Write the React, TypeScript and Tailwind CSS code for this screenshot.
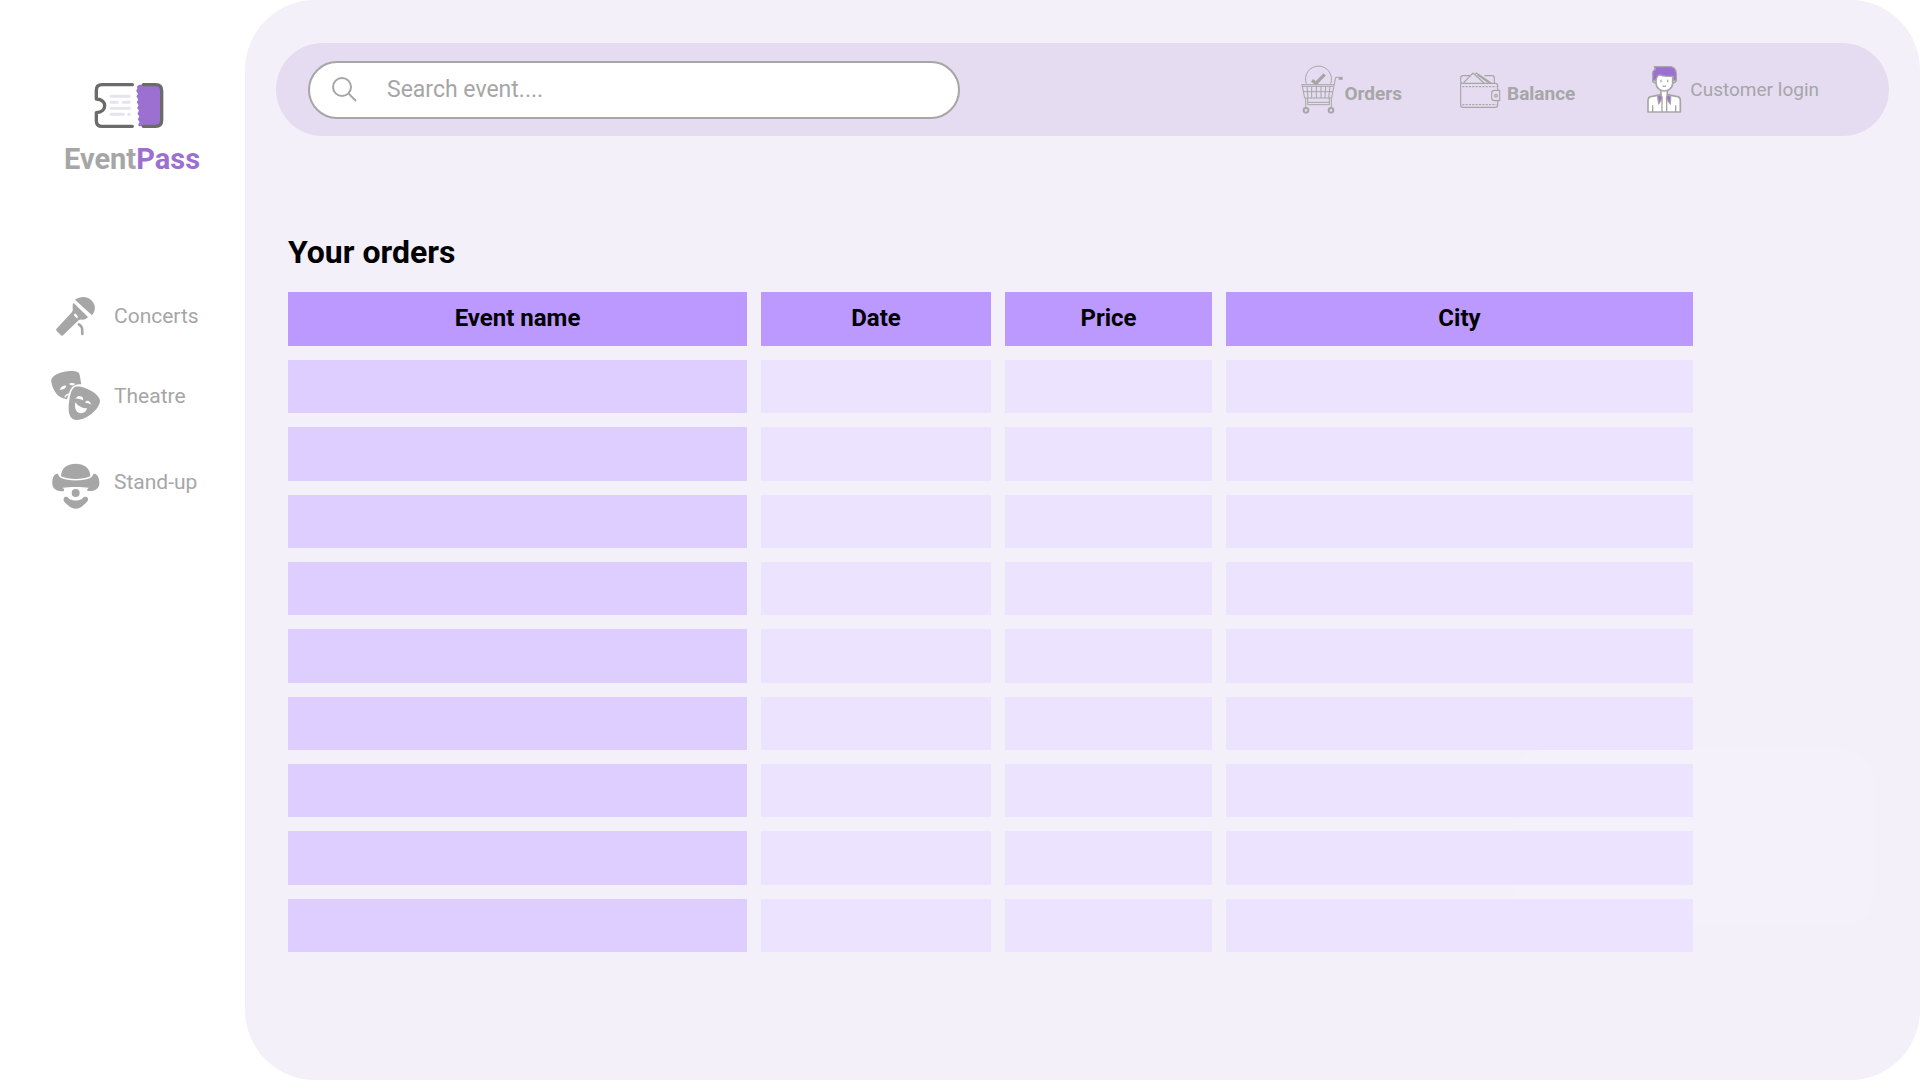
import React from "react";

function TicketLogo() {
  return (
    <svg viewBox="129 33 216 147" className="ml-[29px] h-[49px] w-[72px]" fill="none" aria-hidden="true">
      <path
        d="M267 44 L317 44 Q335 44 335 62 L335 151 Q335 169 317 169 L267 169 q-5 -5 0 -9 q4 -4 -1 -8 q-5 -5 0 -9 q4 -4 -1 -8 q-5 -5 0 -9 q4 -4 -1 -8 q-5 -5 0 -9 q4 -4 -1 -8 q-5 -5 0 -9 q4 -4 -1 -8 q-5 -5 0 -9 q4 -4 -1 -8 q-5 -5 0 -9 q4 -4 -1 -8 Z"
        fill="#9b70d0"
      />
      <path
        d="M247 44 H156 Q139 44 139 61 V87 C157 88 164 98 164 107 C164 117 157 127 139 128 V152 Q139 169 156 169 H247 M280 44 H317 Q335 44 335 62 V151 Q335 169 317 169 H280"
        stroke="#6b6b6b"
        strokeWidth="10"
        strokeLinecap="round"
        strokeLinejoin="round"
      />
      <path
        d="M183 79 H238 M183 97 H202 M219 97 H238 M183 115 H238 M183 133 H220 M236 133 H238"
        stroke="#e5e3ee"
        strokeWidth="9"
        strokeLinecap="round"
      />
    </svg>
  );
}

function MicIcon() {
  return (
    <svg viewBox="33 18 150 150" className="size-[50px] shrink-0" fill="#a6a6a6" aria-hidden="true">
      <path d="M105 44 C121 33 141 33 154 46 C168 59 168 77 156 91 Z" />
      <path d="M101 54 Q97 57 98 66 Q100 75 96 81 L49 132 Q47 135 50 138 L63 151 Q66 154 69 151 L116 106 Q120 102 129 104 Q139 104 144 96 Z" />
      <path d="M101 90 L106 85 L113 94 L112 101 Z" fill="#fff" />
      <path d="M117 118 C127 124 127 130 127 147" fill="none" stroke="#a6a6a6" strokeWidth="8" strokeLinecap="round" />
    </svg>
  );
}

function MasksIcon() {
  return (
    <svg viewBox="33 258 150 150" className="size-[50px] shrink-0 overflow-visible" fill="#a6a6a6" aria-hidden="true">
      <path d="M34 291 C30 269 75 255 105 259 C114 260 118 264 119 270 L124 298 C104 297 94 304 88 322 L81 343 C53 339 39 318 34 291 Z" />
      <path d="M59 314 Q66 300 79 302 Q77 314 59 314 Z M87 297 Q92 291 106 296 Q98 306 87 297 Z" fill="#fff" />
      <path d="M73 336 Q78 326 90 325 L88 329 Q80 330 75 338 Z" fill="#fff" />
      <path d="M106 305 C128 300 177 324 180 346 C181 369 144 404 111 405 C91 405 85 388 86 367 C87 344 92 309 106 305 Z" />
      <path d="M106 341 Q114 327 128 337 L130 346 Q117 340 106 341 Z M136 350 Q147 342 154 359 Q146 353 136 353 Z" fill="#fff" />
      <path d="M106 352 C115 365 130 371 141 370 C138 383 127 387 116 383 C106 379 103 365 106 352 Z" fill="#fff" />
    </svg>
  );
}

function ClownIcon() {
  return (
    <svg viewBox="33 516 150 150" className="size-[50px] shrink-0 overflow-visible" fill="#a6a6a6" aria-hidden="true">
      <path d="M63 574 C63 548 84 536 107 536 C130 536 151 548 151 574 C126 585 88 585 63 574 Z" />
      <path d="M51 566 C57 566 54 573 62 578 C85 589 129 589 152 578 C160 573 157 566 163 566 C173 567 179 580 178 596 C177 612 162 620 142 618 Q139 613 146 608 C134 608 124 606 107 606 C90 606 80 608 68 608 Q75 613 72 618 C52 621 38 612 37 597 C36 580 41 567 51 566 Z" />
      <circle cx="107" cy="624" r="16" fill="#fff" />
      <circle cx="107" cy="624" r="12" />
      <path d="M71 641 C73 633 82 634 87 641 C97 648 117 648 127 641 C132 634 141 633 144 641 C145 651 137 653 130 661 C118 675 97 675 84 661 C77 653 69 651 71 641 Z" />
    </svg>
  );
}

function CartIcon() {
  return (
    <svg viewBox="28 28 135 147" className="h-[49px] w-[45px] shrink-0" fill="none" stroke="#a6a6a6" strokeWidth="3" aria-hidden="true">
      <path d="M50 84 A39 39 0 1 1 123 84" />
      <path d="M67 74 L79 83 L105 56" strokeWidth="10" />
      <path d="M36 87 H133 M38 92 H130 M37 87 L45 127 H126 L138 65 H147" />
      <path d="M147 68 H159" strokeWidth="9" />
      <path d="M42 108 H129 M52 92 L55 127 M66 92 V127 M80 92 V127 M94 92 V127 M108 92 L106 127 M121 92 L117 127" />
      <path d="M48 127 V155 M54 127 V147 H119 V127 M125 127 V155 M54 140 H119" />
      <circle cx="49" cy="164" r="7" strokeWidth="6" />
      <circle cx="124" cy="164" r="7" strokeWidth="6" />
    </svg>
  );
}

function WalletIcon() {
  return (
    <svg viewBox="54 30 132 147" className="h-[49px] w-[44px] shrink-0" fill="none" stroke="#a6a6a6" strokeWidth="3.5" aria-hidden="true">
      <path d="M62 85 V150 Q62 157 69 157 H166 Q173 157 173 150 V137 M173 106 V92 Q173 85 166 85 H68 Q62 85 62 78 V70 Q62 62 70 62 H90 M133 62 H156 Q163 62 163 69 V85" />
      <path d="M71 83 L99 54 L132 84 M104 59 L109 54 L154 84 M112 59 L147 84" />
      <path d="M67 95 H169 M67 149 H169" strokeDasharray="6 4" />
      <path d="M179 106 H164 Q155 106 155 114 V129 Q155 137 164 137 H179 Z" />
      <circle cx="168" cy="122" r="4" />
    </svg>
  );
}

function CustomerIcon() {
  return (
    <svg viewBox="48 30 114 147" className="h-[49px] w-[38px] shrink-0" fill="#fff" stroke="#a6a6a6" strokeWidth="5" strokeLinejoin="round" aria-hidden="true">
      <path d="M57 171 V137 Q57 124 70 124 L96 119 V103 H115 V119 L142 124 Q154 124 154 137 V171 Z" />
      <path d="M86 124 L96 119 L99 131 L89 147 Z M125 124 L115 119 L112 131 L124 147 Z" fill="#9b70d0" strokeWidth="4" />
      <path d="M99 124 V171 M113 124 V171 M71 151 V171 M140 151 V171" fill="none" strokeWidth="4" />
      <path d="M76 72 H72 Q69 83 81 84 M136 72 H140 Q143 83 131 84" />
      <path d="M81 60 H131 V84 C131 99 118 108 106 108 C94 108 81 99 81 84 Z" />
      <path d="M71 77 V56 Q71 46 79 43 L76 35 H126 Q142 39 142 57 V77 H133 V64 H115 Q99 64 91 59 Q83 64 79 77 Z" fill="#9b70d0" strokeWidth="4" />
      <path d="M96 74 V82 M116 74 V82 M101 92 Q106 96 111 92" fill="none" strokeWidth="4" />
    </svg>
  );
}

const categories = [
  { label: "Concerts", icon: <MicIcon />, space: "" },
  { label: "Theatre", icon: <MasksIcon />, space: "mt-[30px]" },
  { label: "Stand-up", icon: <ClownIcon />, space: "mt-9" },
];

const columns = [
  { label: "Event name", width: "w-[459px]" },
  { label: "Date", width: "w-[230px]" },
  { label: "Price", width: "w-[207px]" },
  { label: "City", width: "w-[467px]" },
];

const rows = Array.from({ length: 9 }, (_, i) => i);

export default function App() {
  return (
    <div className="flex min-h-screen bg-white font-[Roboto,sans-serif] text-[#a6a6a6]">
      <aside className="flex w-[245px] shrink-0 flex-col">
        <a href="#" className="mt-[81px] flex flex-col pl-16">
          <TicketLogo />
          <span className="mt-[11px] text-[29px] leading-9 font-bold">
            Event<span className="text-[#9b70d0]">Pass</span>
          </span>
        </a>
        <nav className="mt-[114px] pl-[51px]" aria-label="Categories">
          <ul>
            {categories.map((c) => (
              <li key={c.label} className={c.space}>
                <a href="#" className="flex h-[50px] items-center gap-[13px] text-[21px]">
                  {c.icon}
                  <span className="pt-0.5">{c.label}</span>
                </a>
              </li>
            ))}
          </ul>
        </nav>
      </aside>

      <main className="relative flex-1 rounded-[70px] bg-[#f3f0fa]">
        <div className="absolute right-[47px] bottom-[155px] h-[175px] w-[360px] rounded-[28px] bg-[#f4f1fb]" />
        <header className="mt-[43px] mr-[31px] ml-[31px] flex h-[93px] items-center rounded-full bg-[#e5dcf1] pr-[70px] pl-8">
          <label className="flex h-[58px] w-[652px] items-center rounded-full border-2 border-[#a6a6a6] bg-white pl-[22px]">
            <svg viewBox="0 0 25 25" className="size-[25px] shrink-0" fill="none" stroke="#a6a6a6" strokeWidth="2" aria-hidden="true">
              <circle cx="10" cy="10" r="9" />
              <path d="M16.4 16.4 L24 24" />
            </svg>
            <input
              type="text"
              aria-label="Search event"
              placeholder="Search event...."
              className="ml-[30px] min-w-0 flex-1 bg-transparent pt-0.5 text-[23px] outline-none placeholder:text-[#a6a6a6]"
            />
          </label>
          <nav className="ml-auto flex items-center" aria-label="Account">
            <a href="#" className="flex items-center text-[19px] font-bold">
              <CartIcon />
              <span className="pt-2.5">Orders</span>
            </a>
            <a href="#" className="ml-14 flex items-center gap-[5px] text-[19px] font-bold">
              <WalletIcon />
              <span className="pt-2.5">Balance</span>
            </a>
            <a href="#" className="ml-[70px] flex items-center gap-[7px] text-[19px]">
              <CustomerIcon />
              <span className="pt-0.5">Customer login</span>
            </a>
          </nav>
        </header>

        <section className="relative mt-[96px] mr-[213px] ml-[29px]">
          <h1 className="ml-3.5 text-[32px] leading-10 font-bold text-black">Your orders</h1>
          <table className="mt-1.5 h-[688px] w-full table-fixed border-separate border-spacing-[14px]">
            <thead>
              <tr className="h-[54px]">
                {columns.map((c) => (
                  <th key={c.label} scope="col" className={`${c.width} bg-[#bb99ff] p-0 pb-0.5 text-2xl leading-8 font-bold text-black`}>
                    {c.label}
                  </th>
                ))}
              </tr>
            </thead>
            <tbody>
              {rows.map((r) => (
                <tr key={r} className="h-[53px]">
                  <td className="bg-[#deceff] p-0" />
                  <td className="bg-[#ebe3ff] p-0" />
                  <td className="bg-[#ebe3ff] p-0" />
                  <td className="bg-[#ebe3ff] p-0" />
                </tr>
              ))}
            </tbody>
          </table>
        </section>
      </main>
    </div>
  );
}
